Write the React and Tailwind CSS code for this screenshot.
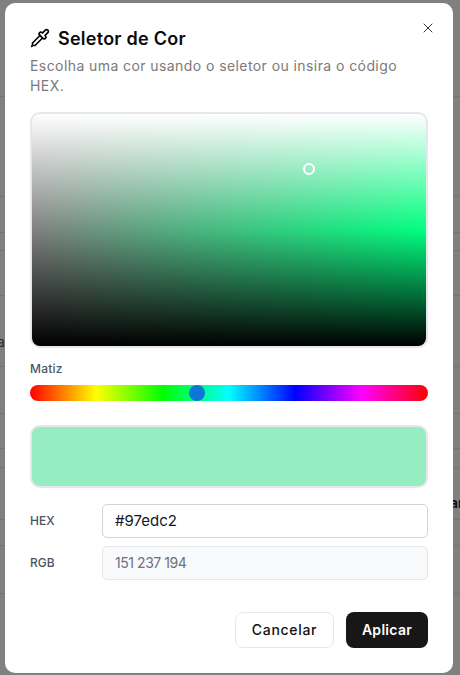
import React from "react";
import { X } from "lucide-react";

const font = "font-['Inter','Liberation_Sans',sans-serif]";
const rowBase = "border-b border-[#747474] overflow-visible whitespace-nowrap";

function Field({ label, children }) {
  return (
    <div className="flex items-center gap-3">
      <div className="w-[60px] text-xs font-medium text-[#4b5563]">{label}</div>
      {children}
    </div>
  );
}

export default function App() {
  return (
    <div className={`relative w-[460px] h-[675px] overflow-hidden bg-[#808080] ${font}`}>
      <div className="absolute inset-0 flex flex-col">
        <div className={`${rowBase} h-[97px]`} />
        <div className={`${rowBase} h-[100px]`} />
        <div className={`${rowBase} h-[36px]`} />
        <div className={`${rowBase} h-[18px]`} />
        <div className={`${rowBase} h-[45px]`} />
        <div className={`${rowBase} h-[71px]`}>
          <span className="block -ml-[3px] mt-[36px] text-sm text-[#2a2a40]">a</span>
        </div>
        <div className={`${rowBase} h-[47px]`} />
        <div className={`${rowBase} h-[35px]`} />
        <div className={`${rowBase} h-[19px]`} />
        <div className={`${rowBase} h-[52px]`}>
          <span className="block ml-[450px] mt-[25px] text-sm font-semibold text-[#111]">ar</span>
        </div>
        <div className={`${rowBase} h-[26px]`} />
        <div className={`${rowBase} h-[48px]`} />
      </div>

      <div className="absolute inset-0 flex items-start pl-[5px] pt-[3px]">
        <div className="relative flex flex-col w-[448px] h-[670px] rounded-[10px] bg-white px-[25px] pt-[22px]">
          <button className="absolute right-[17px] top-[17px] text-[#333]">
            <X size={16} strokeWidth={1.5} />
          </button>

          <div className="flex items-center gap-2 h-[26px]">
            <svg width="20" height="20" viewBox="0 0 24 24" fill="none" stroke="#000" strokeWidth="2" strokeLinecap="round" strokeLinejoin="round">
              <path d="m2 22 1-1h3l9-9" />
              <path d="M3 21v-3l9-9" />
              <path d="m15 6 3.4-3.4a2.1 2.1 0 1 1 3 3L18 9l.4.4a2.1 2.1 0 1 1-3 3l-3.8-3.8a2.1 2.1 0 1 1 3-3l.4.4Z" />
            </svg>
            <h2 className="text-[18px] font-semibold text-[#0a0a0a] tracking-[0.25px]">Seletor de Cor</h2>
          </div>
          <p className="mt-[5px] w-[390px] text-sm leading-5 text-[#7a7a7a] tracking-[0.42px]">
            Escolha uma cor usando o seletor ou insira o código HEX.
          </p>

          <div className="mt-4 relative h-[236px] rounded-[10px] border-2 border-[#e5e7eb] overflow-hidden bg-[linear-gradient(to_bottom,#fff,transparent_50%,transparent_50%,#000),linear-gradient(to_right,#808080,#00ff7f)]">
            <div className="absolute left-[271px] top-[49px] w-3 h-3 rounded-full border-2 border-white" />
          </div>

          <div className="mt-3 text-xs font-medium leading-[18px] text-[#4b5563] tracking-[0.2px]">Matiz</div>
          <div className="mt-[7px] relative h-4 rounded-full bg-[linear-gradient(to_right,#f00,#ff0,#0f0,#0ff,#00f,#f0f,#f00)]">
            <div className="absolute left-[159px] top-0 w-4 h-4 rounded-full bg-[#0f75d8]" />
          </div>

          <div className="mt-6 h-[63px] rounded-[10px] border-2 border-[#e5e7eb] bg-[#97edc2]" />

          <div className="mt-4 flex flex-col gap-2">
            <Field label="HEX">
              <div className="flex-1 h-[34px] rounded-[5px] border border-[#d1d5db] bg-white px-3 flex items-center text-[15px] text-[#111827]">#97edc2</div>
            </Field>
            <Field label="RGB">
              <div className="flex-1 h-[34px] rounded-[5px] border border-[#e5e7eb] bg-[#f9fafb] px-3 flex items-center text-sm text-[#6b7280] tracking-[-0.45px]">151 237 194</div>
            </Field>
          </div>

          <div className="mt-8 flex justify-end gap-3">
            <button className="w-[99px] h-9 rounded-lg border border-[#e5e7eb] bg-white text-sm font-medium text-[#111] tracking-[0.7px]">Cancelar</button>
            <button className="w-[82px] h-9 rounded-lg bg-[#171717] text-sm font-semibold text-white tracking-[0.3px]">Aplicar</button>
          </div>
        </div>
      </div>
    </div>
  );
}
